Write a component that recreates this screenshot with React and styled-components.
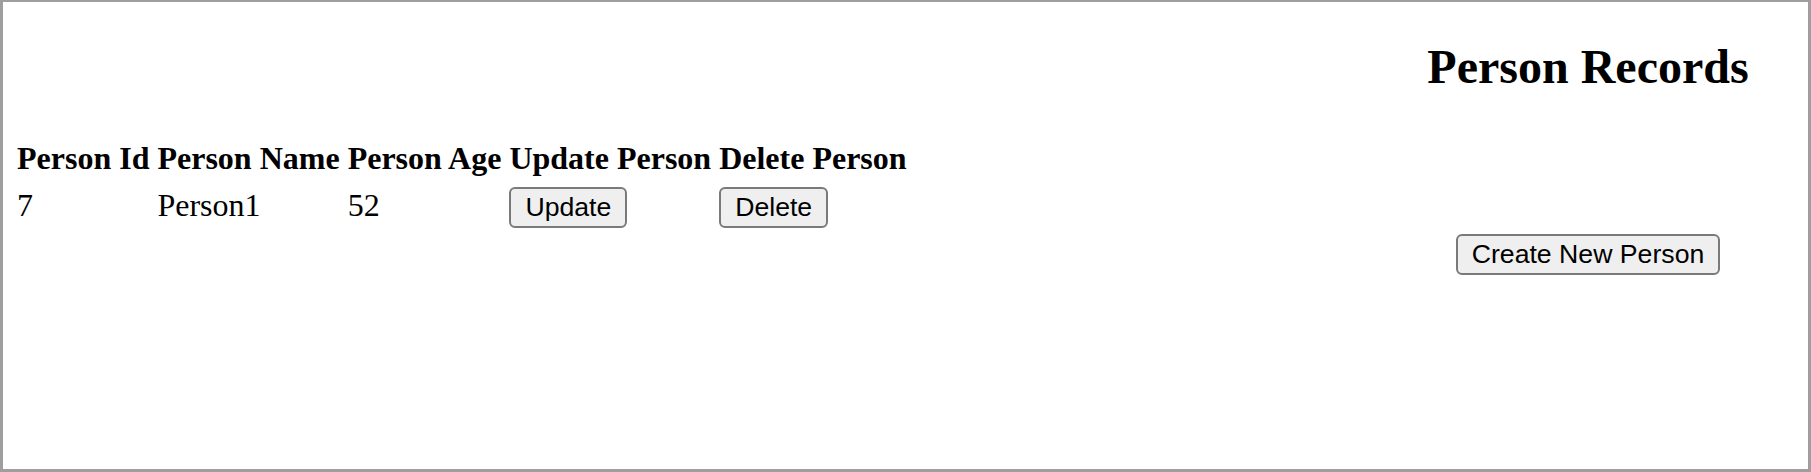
import React from "react";
import styled, { createGlobalStyle } from "styled-components";

const GlobalStyle = createGlobalStyle`
  html, body {
    margin: 0;
    padding: 0;
    background: #ffffff;
  }
  body {
    font-family: "Liberation Serif", "Times New Roman", serif;
    color: #000000;
  }
`;

const Frame = styled.div`
  box-sizing: border-box;
  width: 1811px;
  height: 472px;
  border: 3px solid #9e9e9e;
  border-top-width: 2px;
  display: flex;
  flex-direction: column;
  align-items: flex-start;
  background: #ffffff;
`;

const RightPane = styled.div`
  align-self: flex-end;
  width: 400px;
  margin-right: 20px;
  text-align: center;
  margin-top: ${(p) => p.$top || 0}px;
`;

const Title = styled.h2`
  font-family: "Liberation Serif", "Times New Roman", serif;
  font-size: 48px;
  font-weight: bold;
  margin: 37px 0 40px;
`;

const Table = styled.table`
  margin-left: 8px;
  border-spacing: 4px;
  font-size: 32px;
  font-family: "Liberation Serif", "Times New Roman", serif;
`;

const HeadCell = styled.th`
  padding: 2px;
  font-weight: bold;
  text-align: center;
  white-space: nowrap;
`;

const Cell = styled.td`
  padding: 4px 2px 2px;
  text-align: left;
  vertical-align: baseline;
`;

const Button = styled.button`
  font-family: "Liberation Sans", Arial, sans-serif;
  font-size: 26.67px;
  line-height: 31px;
  padding: 3px 14px;
  border: 2px solid #7a7a7a;
  border-radius: 6px;
  background: #efefef;
  color: #000000;
  cursor: pointer;
`;

const people = [{ id: 7, name: "Person1", age: 52 }];

export default function App() {
  return (
    <>
      <GlobalStyle />
      <Frame>
        <RightPane>
          <Title>Person Records</Title>
        </RightPane>
        <Table>
          <thead>
            <tr>
              <HeadCell>Person Id</HeadCell>
              <HeadCell>Person Name</HeadCell>
              <HeadCell>Person Age</HeadCell>
              <HeadCell>Update Person</HeadCell>
              <HeadCell>Delete Person</HeadCell>
            </tr>
          </thead>
          <tbody>
            {people.map((p) => (
              <tr key={p.id}>
                <Cell>{p.id}</Cell>
                <Cell>{p.name}</Cell>
                <Cell>{p.age}</Cell>
                <Cell>
                  <Button>Update</Button>
                </Cell>
                <Cell>
                  <Button>Delete</Button>
                </Cell>
              </tr>
            ))}
          </tbody>
        </Table>
        <RightPane>
          <Button>Create New Person</Button>
        </RightPane>
      </Frame>
    </>
  );
}
